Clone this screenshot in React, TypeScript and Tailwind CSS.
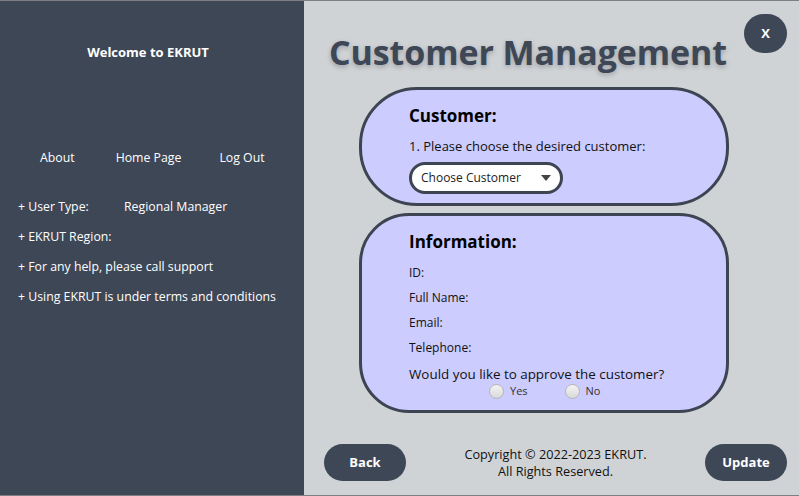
import React from 'react';

const font = { fontFamily: '"Open Sans", "Noto Sans", sans-serif' };

function Radio({ label }: { label: string }) {
  return (
    <label className="flex items-center gap-[6px] text-[11px] text-[#333]">
      <span className="w-[15px] h-[15px] rounded-full border border-[#b5b5b5] bg-gradient-to-b from-[#f4f4f4] to-[#d9d9d9]" />
      {label}
    </label>
  );
}

export default function App() {
  const infoLines = ['+ EKRUT Region:', '+ For any help, please call support', '+ Using EKRUT is under terms and conditions'];
  const fields = ['ID:', 'Full Name:', 'Email:', 'Telephone:'];

  return (
    <div style={font} className="w-[799px] h-[496px] flex border-y border-[#7d7f82] overflow-hidden">
      <div className="w-[304px] shrink-0 bg-[#3e4756] text-white flex flex-col">
        <p className="text-[13px] font-bold text-center pt-[42px] pr-[8px]">Welcome to EKRUT</p>
        <div className="flex mt-[86px] pl-[40px] text-[12.3px] leading-[18px]">
          <span>About</span>
          <span className="ml-[41px]">Home Page</span>
          <span className="ml-[38px]">Log Out</span>
        </div>
        <div className="mt-[31px] pl-[18px] flex flex-col gap-[12px] text-[12.3px] leading-[18px]">
          <div className="flex">
            <span className="w-[106px]">+ User Type:</span>
            <span>Regional Manager</span>
          </div>
          {infoLines.map((l) => (
            <span key={l}>{l}</span>
          ))}
        </div>
      </div>

      <div className="relative flex-1 bg-[#d0d3d6] flex flex-col">
        <button className="absolute left-[440px] top-[13px] w-[43px] h-[39px] rounded-full bg-[#3e4756] text-white text-[13px] font-bold">
          X
        </button>
        <h1
          className="ml-[25px] mt-[29px] text-[34px] leading-[44px] font-bold text-[#3e4756] tracking-[-0.1px]"
          style={{ textShadow: '0 2px 5px rgba(0,0,0,0.25)' }}
        >
          Customer Management
        </h1>

        <div className="ml-[55px] w-[370px] mt-[13px] flex flex-col gap-[7px]">
          <div className="h-[119px] rounded-[58px] border-[3px] border-[#3d4452] bg-[#ccccff] pl-[47px] pt-[14px]">
            <p className="text-[17px] font-bold leading-[24px] text-black">Customer:</p>
            <p className="text-[13px] leading-[18px] mt-[9px] text-[#111]">1. Please choose the desired customer:</p>
            <div className="mt-[7px] w-[154px] h-[32px] rounded-full border-[3px] border-[#3d4452] bg-white flex items-center justify-between pl-[9px] pr-[9px]">
              <span className="text-[12px] text-[#222]">Choose Customer</span>
              <svg width="10" height="6" viewBox="0 0 10 6">
                <path d="M0 0 L10 0 L5 6 Z" fill="#444" />
              </svg>
            </div>
          </div>

          <div className="h-[200px] rounded-[50px] border-[3px] border-[#3d4452] bg-[#ccccff] pl-[47px] pt-[14px]">
            <p className="text-[17px] font-bold leading-[24px] text-black">Information:</p>
            <div className="mt-[10px] flex flex-col gap-[7px] text-[12px] leading-[18px] text-[#111]">
              {fields.map((f) => (
                <span key={f}>{f}</span>
              ))}
            </div>
            <p className="text-[13.4px] leading-[18px] mt-[8px] text-[#111]">Would you like to approve the customer?</p>
            <div className="flex gap-[37px] pl-[80px] mt-[0px]">
              <Radio label="Yes" />
              <Radio label="No" />
            </div>
          </div>
        </div>

        <div className="flex items-center justify-between pl-[20px] pr-[12px] mt-[31px]">
          <button className="w-[82px] h-[37px] rounded-full bg-[#3e4756] text-white text-[13px] font-bold">Back</button>
          <div className="text-center text-[12.7px] leading-[17px] text-[#111]">
            <p>Copyright © 2022-2023 EKRUT.</p>
            <p>All Rights Reserved.</p>
          </div>
          <button className="w-[82px] h-[37px] rounded-full bg-[#3e4756] text-white text-[13px] font-bold">Update</button>
        </div>
      </div>
    </div>
  );
}
